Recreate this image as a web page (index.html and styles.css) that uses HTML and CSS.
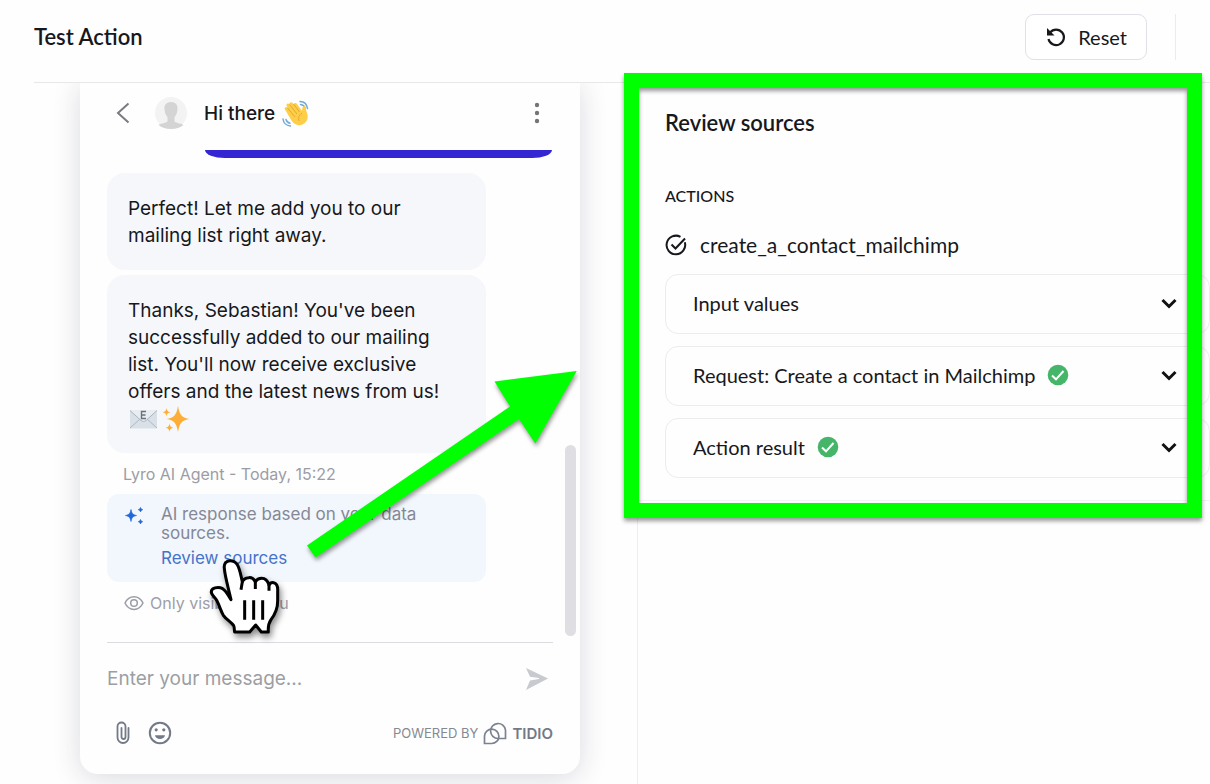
FILE: index.html
```html
<!DOCTYPE html>
<html lang="en">
<head>
<meta charset="utf-8">
<meta name="viewport" content="width=device-width, initial-scale=1">
<title>Test Action</title>
<link rel="stylesheet" href="styles.css">
</head>
<body>
<header class="topbar">
  <h1 class="title">Test Action</h1>
  <button class="reset" type="button">
    <svg width="22" height="22" viewBox="0 0 22 22" fill="none" stroke="currentColor" stroke-width="2.200" aria-hidden="true"><path d="M5 6.500A7.800 7.800 0 1 1 3.500 13"/><path d="M2 2v7.500h7.500z" fill="currentColor" stroke="none"/></svg>
    <span>Reset</span>
  </button>
  <span class="topbar-rule"></span>
</header>
<main class="workspace">
  <section class="preview" aria-label="Chat preview">
    <div class="chat">
      <div class="chat-head">
        <button class="icon-btn" type="button" aria-label="Back"><svg width="16" height="24" viewBox="0 0 16 24" fill="none" stroke="#7a7b80" stroke-width="2"><path d="M13.500 2.500 3 12l10.500 9.500"/></svg></button>
        <span class="avatar"><svg width="32" height="32" viewBox="0 0 32 32" aria-hidden="true"><circle cx="16" cy="16" r="16" fill="#f3f3f3"/><path d="M16 5c-4.500 0-7 3-6.500 7 .3 4 1.500 6.500 3 8v4c0 2-6 2-9 4 3 2.800 7.500 4 12.500 4s9.500-1.200 12.500-4c-3-2-9-2-9-4v-4c1.500-1.500 2.700-4 3-8C23 8 20.500 5 16 5z" fill="#d4d4d4"/></svg></span>
        <h2 class="chat-title">Hi there</h2>
        <svg class="wave" width="28" height="28" viewBox="0 0 28 28" aria-hidden="true"><g fill="none" stroke="#72a9d6" stroke-width="1.500" stroke-linecap="round"><path d="M18 2.500c4 .2 7 3 7.500 7M18.500 5.500c2.500.3 4 1.500 4.500 3.500M1 20c.5 4 3 6.500 7.500 7M4 20.500c.5 2 1.700 3.200 4 3.700"/></g><path d="M3 10.500c-1-1.500 1-3.500 2.700-1.800l-1-1.800C3.700 5 6 3.500 7.300 5.200 7 3.300 9.500 2.300 10.700 4l1 1.200c.5-1.500 2.500-1.500 3.300-.2l5 7c.2-2 .2-4.500 2-5 1.500-.2 2 1.200 2 3 .2 3 2.500 5.500 1.500 9.500-1 4.500-5.500 7.500-10 6.500-3-.7-4.500-2.500-6-4.500z" fill="#fdcf48"/><path d="m5.500 9 7.500 9M7.500 5.500l7.500 9.500M11.500 5l6 8M17 22c-1-3 0-6 3-8" fill="none" stroke="#e59b2d" stroke-width=".8"/></svg>
        <button class="icon-btn more" type="button" aria-label="More options"><svg width="6" height="22" viewBox="0 0 6 22" fill="#757579"><circle cx="3" cy="3" r="2.200"/><circle cx="3" cy="11" r="2.200"/><circle cx="3" cy="19" r="2.200"/></svg></button>
      </div>
      <div class="messages">
        <div class="sent-edge"></div>
        <p class="bubble">Perfect! Let me add you to our<br>mailing list right away.</p>
        <p class="bubble">Thanks, Sebastian! You've been<br>successfully added to our mailing<br>list. You'll now receive exclusive<br>offers and the latest news from us!<br><span class="emojis"><svg width="30" height="22" viewBox="0 0 30 22" aria-hidden="true"><path d="M2 2.500h27v18H2z" fill="#d9e0e7"/><path d="m2 20 10-9M29 20l-10-9" stroke="#aeb8c3" fill="none"/><path d="m2 2.500 11 10c1.500 1.300 3.500 1.300 5 0l11-10" fill="#e9edf1" stroke="#aab5c0"/><path d="M18 3.500h-4.500v7H18M13.500 7h4" fill="none" stroke="#69717d" stroke-width="1.400"/></svg><svg width="28" height="28" viewBox="0 0 28 28" fill="#fcae37" aria-hidden="true"><path d="M16 1c1.500 9 4 12 11.500 13-7.500 1-10 4-11.500 13-1.500-9-4-12-11.500-13 7.500-1 10-4 11.500-13zM4.500 3c.6 3 1.300 3.700 4 4.200-2.700.5-3.400 1.200-4 4.200-.6-3-1.300-3.700-4-4.200 2.700-.5 3.400-1.200 4-4.200zM7.500 18.500c.6 3 1.300 3.700 4 4.200-2.700.5-3.400 1.200-4 4.200-.6-3-1.300-3.700-4-4.200 2.700-.5 3.400-1.200 4-4.200z"/></svg></span></p>
        <p class="meta">Lyro AI Agent - Today, 15:22</p>
        <div class="source-note">
          <svg width="20" height="20" viewBox="0 0 20 20" fill="#2269d8" stroke="#2269d8" stroke-width=".7" aria-hidden="true"><path d="M7 4.500c.7 4 2 5.300 5.500 6-3.500.7-4.800 2-5.500 6-.7-4-2-5.300-5.500-6 3.500-.7 4.800-2 5.500-6zM16.500 2.500l.7 1.500 1.500.7-1.500.7-.7 1.500-.7-1.500-1.500-.7 1.500-.7zM16.500 14.500l.7 1.500 1.500.7-1.500.7-.7 1.500-.7-1.500-1.500-.7 1.500-.7z"/></svg>
          <div class="note-text"><p>AI response based on your data<br>sources.</p><a href="#sources">Review sources</a></div>
        </div>
        <p class="visibility"><svg width="20" height="16" viewBox="0 0 20 16" fill="none" stroke="#9a9da8" stroke-width="1.500" aria-hidden="true"><path d="M1 8c4-8.500 14-8.500 18 0-4 8.500-14 8.500-18 0z"/><circle cx="10" cy="8" r="3.300"/></svg>Only visible to you</p>
        <span class="scroll-thumb"></span>
      </div>
      <form class="composer">
        <div class="entry">
          <input type="text" aria-label="Message" placeholder="Enter your message...">
          <button class="icon-btn" type="button" aria-label="Send"><svg width="24" height="24" viewBox="0 0 24 24" fill="#c8cad0"><path d="M1 1l22 10.500L1 23l4-9.500L14 12v-1L5 9.800z"/></svg></button>
        </div>
        <div class="tools">
          <button class="icon-btn" type="button" aria-label="Attach file"><svg width="16" height="24" viewBox="0 0 16 24" fill="none" stroke="#737988" stroke-width="1.800" stroke-linecap="round"><path d="M13.500 7v9.500a5.500 5.500 0 0 1-11 0v-11a4 4 0 0 1 8 0v10.500a2 2 0 0 1-4 0V7"/></svg></button>
          <button class="icon-btn" type="button" aria-label="Insert emoji"><svg width="24" height="24" viewBox="0 0 24 24" fill="none" stroke="#737988" stroke-width="2"><circle cx="12" cy="12" r="10.200"/><path d="M7 14.200h10c-.7 5-9.300 5-10 0z" fill="#737988" stroke="none"/><circle cx="8.200" cy="8.800" r="1.600" fill="#737988" stroke="none"/><circle cx="15.800" cy="8.800" r="1.600" fill="#737988" stroke="none"/></svg></button>
          <span class="powered">POWERED BY <svg width="24" height="24" viewBox="0 0 24 24" fill="none" stroke="#7c8290" stroke-width="1.700" aria-hidden="true"><path d="M1.500 22.500V15a7.200 7.200 0 1 1 7.200 7.500z"/><path d="M22.500 17.500V9A7.500 7.500 0 1 0 15 17.500z"/></svg><b>TIDIO</b></span>
        </div>
      </form>
    </div>
  </section>
  <section class="sources" id="sources">
    <div class="source-panel">
      <h2 class="source-title">Review sources</h2>
      <h3 class="source-label">ACTIONS</h3>
      <p class="action-name"><svg width="22" height="22" viewBox="0 0 22 22" fill="none" stroke="currentColor" stroke-width="2" aria-hidden="true"><path d="M19.800 8.300A9.300 9.300 0 1 1 15.500 2.900"/><path d="m6.500 10.500 4 4L20 4.500"/></svg>create_a_contact_mailchimp</p>
      <button class="accordion" type="button"><span>Input values</span><svg class="chevron" width="16" height="12" viewBox="0 0 16 12"><path d="m1.500 3 6.500 6.500L14.500 3"/></svg></button>
      <button class="accordion" type="button"><span>Request: Create a contact in Mailchimp</span><svg width="22" height="22" viewBox="0 0 22 22"><circle cx="11" cy="11" r="10.300" fill="#45b569"/><path d="m5 11.500 4 3.800 7.500-8.300" fill="none" stroke="#fff" stroke-width="2"/></svg><svg class="chevron" width="16" height="12" viewBox="0 0 16 12"><path d="m1.500 3 6.500 6.500L14.500 3"/></svg></button>
      <button class="accordion" type="button"><span>Action result</span><svg width="22" height="22" viewBox="0 0 22 22"><circle cx="11" cy="11" r="10.300" fill="#45b569"/><path d="m5 11.500 4 3.800 7.500-8.300" fill="none" stroke="#fff" stroke-width="2"/></svg><svg class="chevron" width="16" height="12" viewBox="0 0 16 12"><path d="m1.500 3 6.500 6.500L14.500 3"/></svg></button>
    </div>
  </section>
</main>
<div class="highlight"></div>
<svg class="arrow" width="290" height="200" viewBox="300 365 290 200" aria-hidden="true"><path d="M576.700 371 494.500 381.500 510 406.500 307 545.500 315.500 557.500 519 419 535.300 443.500z" fill="#0f0"/></svg>
<svg class="pointer" width="80" height="85" viewBox="315 195 240 255" aria-hidden="true"><path d="M390 212c-12 0-19 10-17 23 2 25 12 58 20 94-8-12-14-26-25-33-13-7-36-3-34 12 2 9 11 14 16 23 9 17 12 31 20 45 8 12 24 20 31 31 3 6 1 12 3 19h45l18-21 17 21h21c-1-13 1-27 8-37 13-17 20-33 20-56v-28c1-14-1-25-12-27-6-1-11 1-14 7-4-13-10-20-22-20-9 0-15 4-19 10-5-9-12-13-20-12-10 1-16 5-19 12-5-19-7-38-15-51-5-8-12-12-22-12z" fill="#fff" stroke="#000" stroke-width="9" stroke-linejoin="round"/><path d="M427 275l-4 24M466 273v24M507 285v17M434 331v58M461 331v58M488 331v58" fill="none" stroke="#000" stroke-width="9"/></svg>
</body>
</html>
```
FILE: styles.css
```css
* { box-sizing: border-box; }
body { position: relative; margin: 0; min-height: 100vh; background: #fefefe; color: #17181c; font-family: Lato, sans-serif; font-size: 20px; overflow-x: hidden; }
h1, h2, h3, p { margin: 0; }
svg { display: block; flex: none; }
button { font: inherit; color: inherit; cursor: pointer; }
.topbar { display: flex; align-items: center; height: 83px; margin-left: 34px; padding: 0 34px 8px 0; border-bottom: 1px solid #e8e8eb; }
.title { flex: 1; font-size: 22px; line-height: 28px; font-weight: 600; }
.reset { display: flex; align-items: center; gap: 11px; height: 46px; padding: 0 19px; border: 1px solid #e0e1e8; border-radius: 9px; background: #fff; }
.topbar-rule { width: 1px; height: 46px; margin-left: 28px; background: #ebebee; }
.workspace { display: grid; grid-template-columns: 638px minmax(0, 1fr); min-height: 701px; }
.preview { padding: 0 57px 10px 80px; border-right: 1px solid #eeeef0; overflow: hidden; }
.chat { display: flex; flex-direction: column; background: #fefefe; border-radius: 0 0 18px 18px; box-shadow: 0 4px 28px rgba(25, 30, 60, .16); font-family: Inter, sans-serif; }
.chat-head { display: flex; align-items: center; height: 67px; padding: 0 40px 7px 35px; }
.icon-btn { display: grid; place-items: center; padding: 0; border: 0; background: none; }
.avatar { margin-left: 24px; }
.chat-title { margin: 0 7px 0 17px; font-size: 19px; font-weight: 500; }
.more { margin-left: auto; }
.messages { position: relative; display: flex; flex-direction: column; align-items: flex-start; padding: 0 28px 0 27px; }
.sent-edge { align-self: flex-end; width: 347px; height: 8px; margin-bottom: 15px; border-radius: 0 0 20px 20px / 0 0 8px 8px; background: #3427d3; }
.bubble { width: 379px; margin-bottom: 5px; padding: 22px 21px 21px; border-radius: 18px; background: #f6f7fa; font-size: 19px; line-height: 27px; white-space: nowrap; }
.emojis { display: flex; align-items: center; gap: 4px; height: 27px; }
.meta { margin: 5px 0 9px 16px; color: #9b9da6; font-size: 16px; line-height: 22px; }
.source-note { display: flex; gap: 17px; width: 379px; padding: 11px 17px 12px; border-radius: 12px; background: #f2f6fd; color: #858894; font-size: 17px; line-height: 19px; }
.note-text a { display: block; margin-top: 3px; color: #4573ca; line-height: 24px; text-decoration: none; }
.visibility { display: flex; align-items: center; gap: 6px; margin: 10px 0 28px 17px; color: #9d9faa; font-size: 16px; line-height: 22px; }
.scroll-thumb { position: absolute; right: 4px; bottom: 6px; width: 11px; height: 191px; border-radius: 6px; background: #dedee3; }
.composer { margin: 0 27px; border-top: 1px solid #dcdce0; }
.entry { display: flex; align-items: center; height: 71px; padding-right: 4px; }
.entry input { flex: 1; min-width: 0; padding: 0; border: 0; outline: 0; background: none; color: inherit; font: inherit; font-size: 19px; }
.entry input::placeholder { color: #9c9ea4; opacity: 1; }
.tools { display: flex; align-items: center; gap: 17px; height: 60px; padding: 0 0 22px 8px; }
.powered { display: flex; align-items: center; gap: 5px; margin-left: auto; color: #858993; font-size: 13px; }
.powered b { color: #737988; font-size: 15px; font-weight: 600; }
.source-panel { display: flex; flex-direction: column; padding: 26px 0 22px 27px; border-bottom: 1px solid #f2f2f4; }
.source-title { font-size: 22px; line-height: 28px; font-weight: 600; }
.source-label { margin-top: 49px; font-size: 16px; line-height: 20px; font-weight: 500; }
.action-name { display: flex; align-items: center; gap: 13px; margin: 25px 0 15px; font-size: 21px; line-height: 28px; }
.accordion { display: flex; align-items: center; gap: 12px; height: 60px; margin-bottom: 12px; padding: 0 32px 2px 27px; border: 1px solid #ececef; border-radius: 13px; background: #fefefe; font-size: 20px; text-align: left; }
.accordion:last-child { margin-bottom: 0; }
.chevron { margin-left: auto; fill: none; stroke: #111; stroke-width: 3; }
.highlight { position: absolute; left: 624px; top: 73px; width: 578px; height: 445px; border: 15px solid #0f0; filter: drop-shadow(0 3px 2px rgba(0, 0, 0, .4)); pointer-events: none; }
.arrow, .pointer { position: absolute; overflow: visible; pointer-events: none; }
.arrow { left: 300px; top: 365px; filter: drop-shadow(1px 3px 2px rgba(0, 0, 0, .4)); }
.pointer { left: 205px; top: 555px; filter: drop-shadow(2px 4px 3px rgba(0, 0, 0, .45)); }
```
